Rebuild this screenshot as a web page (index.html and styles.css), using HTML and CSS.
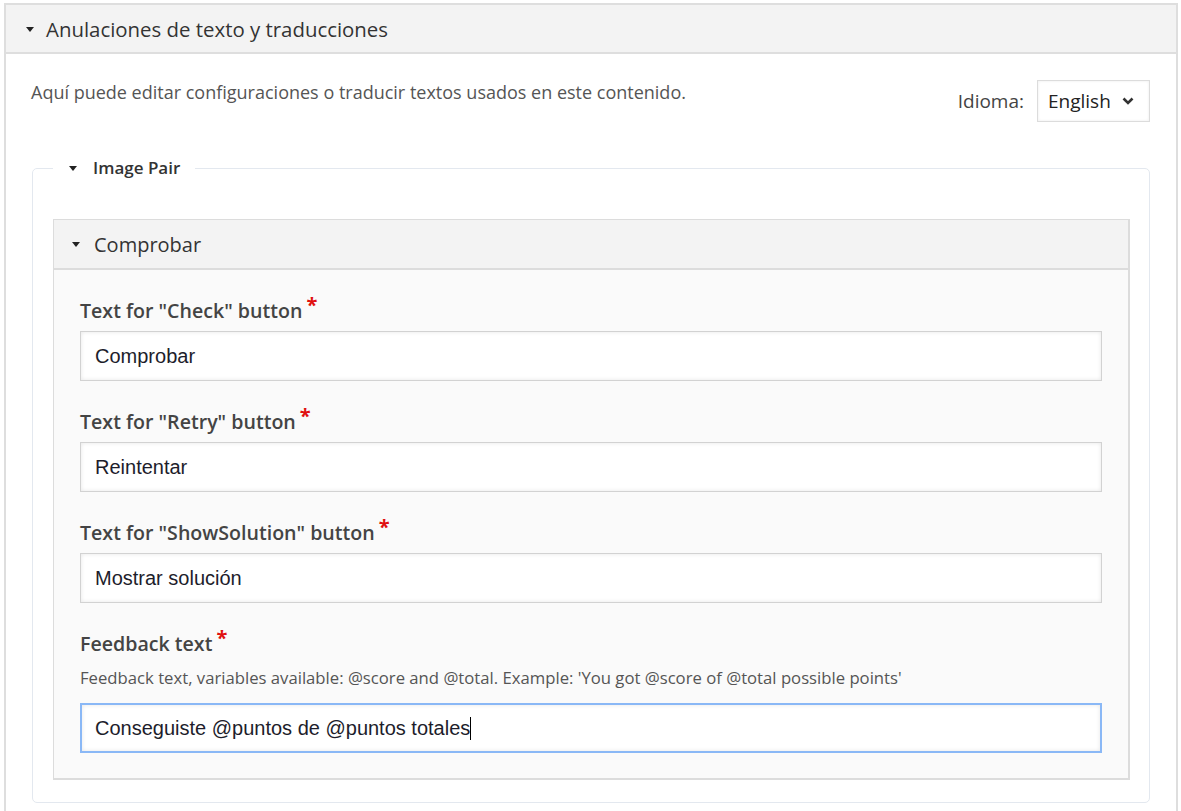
FILE: index.html
```html
<!DOCTYPE html>
<html lang="es">
<head>
<meta charset="utf-8">
<title>Anulaciones de texto y traducciones</title>
<link rel="stylesheet" href="styles.css">
</head>
<body>
<div class="panel">
  <div class="panel-head">
    <span class="tri"></span>
    <span>Anulaciones de texto y traducciones</span>
  </div>
  <div class="panel-body">
    <div class="top-row">
      <p class="desc">Aquí puede editar configuraciones o traducir textos usados en este contenido.</p>
      <div class="lang">
        <span class="lang-label">Idioma:</span>
        <div class="select">
          <span>English</span>
          <svg class="chev" width="12" height="8" viewBox="0 0 12 8"><path d="M1.5 1.5 L6 6 L10.5 1.5" fill="none" stroke="#333" stroke-width="2.6"/></svg>
        </div>
      </div>
    </div>
    <fieldset class="fs">
      <legend class="fs-legend"><span class="tri small"></span>Image Pair</legend>
      <div class="group">
        <div class="group-head"><span class="tri"></span><span>Comprobar</span></div>
        <div class="group-body">
          <div class="field">
            <div class="label">Text for "Check" button<span class="req">*</span></div>
            <div class="input">Comprobar</div>
          </div>
          <div class="field">
            <div class="label">Text for "Retry" button<span class="req">*</span></div>
            <div class="input">Reintentar</div>
          </div>
          <div class="field">
            <div class="label">Text for "ShowSolution" button<span class="req">*</span></div>
            <div class="input">Mostrar solución</div>
          </div>
          <div class="field">
            <div class="label">Feedback text<span class="req">*</span></div>
            <div class="help">Feedback text, variables available: @score and @total. Example: 'You got @score of @total possible points'</div>
            <div class="input focus">Conseguiste @puntos de @puntos totales<span class="caret"></span></div>
          </div>
        </div>
      </div>
    </fieldset>
  </div>
</div>
</body>
</html>
```

FILE: styles.css
```css
html, body {
  margin: 0;
  padding: 0;
  background: #fff;
  font-family: "Open Sans", "Noto Sans", sans-serif;
  color: #333;
}

.panel {
  margin: 3px 3px 0 4px;
  border: 2px solid #dedede;
  border-bottom: none;
  height: 820px;
}

.panel-head {
  height: 47px;
  background: #f3f3f3;
  border-bottom: 2px solid #dedede;
  display: flex;
  align-items: center;
  padding-left: 20px;
  font-size: 20.4px;
  color: #333;
}

.tri {
  display: inline-block;
  width: 0;
  height: 0;
  border-left: 4px solid transparent;
  border-right: 4px solid transparent;
  border-top: 5px solid #222;
  margin-right: 12px;
  margin-top: 1px;
}

.panel-body {
  padding: 26px 26px 0 25px;
}

.top-row {
  display: flex;
  justify-content: space-between;
  align-items: flex-start;
}

.desc {
  margin: 0;
  font-size: 18px;
  line-height: 24px;
  color: #555;
}

.lang {
  display: flex;
  align-items: center;
}

.lang-label {
  font-size: 19px;
  color: #444;
  margin-right: 13px;
}

.select {
  height: 40px;
  width: 111px;
  box-sizing: content-box;
  border: 1px solid #dcdcdc;
  box-shadow: inset 0 0 3px rgba(0,0,0,0.08);
  display: flex;
  align-items: center;
  font-size: 19px;
  color: #222;
}

.select span {
  margin-left: 10px;
}

.chev {
  margin-left: 11px;
}

.fs {
  margin: 36px 0 0 1px;
  padding: 41px 19px 22px 20px;
  border: 1px solid #e3e8ef;
  border-radius: 5px;
  min-inline-size: 0;
}

.fs-legend {
  margin-left: 0;
  padding: 0 15px 0 16px;
  font-size: 17px;
  font-weight: 600;
  line-height: 20px;
  color: #333;
}

.tri.small {
  margin-right: 16px;
  vertical-align: 3px;
}

.group {
  border: 1px solid #dcdcdc;
  border-right-width: 2px;
  border-bottom-width: 2px;
  background: #fafafa;
}

.group-head {
  height: 48px;
  background: #f3f3f3;
  border-bottom: 2px solid #dcdcdc;
  display: flex;
  align-items: center;
  padding-left: 18px;
  font-size: 20px;
  color: #333;
}

.group-head .tri {
  margin-right: 14px;
}

.group-body {
  padding: 29px 26px 25px 26px;
  display: flex;
  flex-direction: column;
  gap: 29px;
}

.label {
  font-size: 19.6px;
  font-weight: 600;
  line-height: 24px;
  color: #444;
  margin-bottom: 8px;
  white-space: nowrap;
}

.req {
  color: #e01010;
  font-size: 20px;
  font-weight: 700;
  line-height: 0;
  margin-left: 4px;
  position: relative;
  top: -6px;
}

.help {
  font-size: 16.7px;
  line-height: 20px;
  color: #555;
  margin-top: 12px;
  margin-bottom: 15px;
  white-space: nowrap;
}

.input {
  height: 48px;
  border: 1px solid #d2d2d2;
  background: #fff;
  box-shadow: inset 0 0 4px rgba(0,0,0,0.1);
  display: flex;
  align-items: center;
  padding-left: 14px;
  font-family: "Liberation Sans", Arial, sans-serif;
  font-size: 20px;
  color: #1d1d2b;
}

.input.focus {
  border: 2px solid #8ab8f6;
  height: 46px;
  padding-left: 13px;
}

.caret {
  display: inline-block;
  width: 1px;
  height: 23px;
  background: #000;
}
```
